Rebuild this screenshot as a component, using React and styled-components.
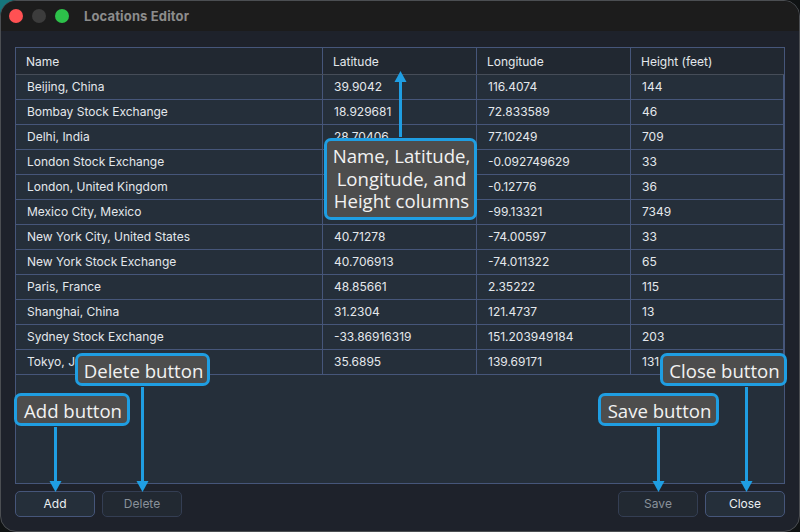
import React from "react";
import styled, { createGlobalStyle } from "styled-components";

const GlobalStyle = createGlobalStyle`
  body {
    margin: 0;
    background-color: #101314;
  }
`;

const Desktop = styled.div`
  position: relative;
  width: 800px;
  height: 532px;
  overflow: hidden;
  background: linear-gradient(135deg, #16767c 0, #16767c 8px, #101314 16px);
`;

const Window = styled.div`
  box-sizing: border-box;
  width: 800px;
  height: 532px;
  display: flex;
  flex-direction: column;
  border: 1px solid #4b4e52;
  border-radius: 16px;
  overflow: hidden;
  background-color: #1e222b;
  font-family: Inter, "Liberation Sans", sans-serif;
`;

const TitleBar = styled.div`
  height: 30px;
  flex: none;
  display: flex;
  align-items: center;
  gap: 9px;
  padding-left: 8px;
  background-color: #1c1c1c;
`;

const Light = styled.div`
  width: 14px;
  height: 14px;
  border-radius: 50%;
  background-color: ${(props) => props.$color};
`;

const Title = styled.div`
  margin-left: 6px;
  font-size: 13px;
  font-weight: 700;
  letter-spacing: 0.14px;
  color: #8c8c8c;
`;

const Table = styled.div`
  box-sizing: border-box;
  width: 770px;
  height: 437px;
  flex: none;
  margin: 16px 0 0 14px;
  border: 1px solid #46567a;
  background-color: #252f3a;
`;

const Row = styled.div`
  box-sizing: border-box;
  display: grid;
  grid-template-columns: 307px 154px 154px 1fr;
  height: 25px;
  border-bottom: 1px solid #46567a;
`;

const HeaderRow = styled(Row)`
  height: 27px;
  border-bottom-color: #464d58;
  background-color: #212831;
`;

const Cell = styled.div`
  display: flex;
  align-items: center;
  padding: 0 0 2px 11px;
  border-right: 1px solid #46567a;
  font-size: 12px;
  color: #e4e8ec;
  white-space: nowrap;
`;

const HeaderCell = styled(Cell)`
  padding: 0 0 0 10px;

  &:last-child {
    border-right: none;
  }
`;

const Footer = styled.div`
  display: flex;
  gap: 7px;
  padding: 7px 14px 0;
`;

const Spacer = styled.div`
  flex: 1;
`;

const Button = styled.button`
  box-sizing: border-box;
  width: 80px;
  height: 26px;
  padding: 0 0 1px;
  border: 1px solid #46567a;
  border-radius: 5px;
  background-color: #252f3a;
  font-family: inherit;
  font-size: 12px;
  color: #eceff2;

  &:disabled {
    border-color: #343e53;
    background-color: #222932;
    color: #89919a;
  }
`;

const Callout = styled.div`
  box-sizing: border-box;
  position: absolute;
  left: ${(props) => props.$x}px;
  top: ${(props) => props.$y}px;
  width: ${(props) => props.$width}px;
  height: ${(props) => props.$height}px;
  padding: 4px 0 0 2px;
  border: 3px solid #1f9ee2;
  border-radius: 7px;
  background-color: #4d4d4d;
  font-family: "Open Sans", "Noto Sans", sans-serif;
  font-size: 18.6px;
  line-height: 22.5px;
  text-align: center;
  white-space: nowrap;
  color: #f2f2f2;
`;

const ArrowSvg = styled.svg`
  position: absolute;
  left: ${(props) => props.$x}px;
  top: ${(props) => props.$y}px;
  fill: #1f9ee2;
`;

const columns = ["Name", "Latitude", "Longitude", "Height (feet)"];

const locations = [
  ["Beijing, China", "39.9042", "116.4074", "144"],
  ["Bombay Stock Exchange", "18.929681", "72.833589", "46"],
  ["Delhi, India", "28.70406", "77.10249", "709"],
  ["London Stock Exchange", "", "-0.092749629", "33"],
  ["London, United Kingdom", "", "-0.12776", "36"],
  ["Mexico City, Mexico", "", "-99.13321", "7349"],
  ["New York City, United States", "40.71278", "-74.00597", "33"],
  ["New York Stock Exchange", "40.706913", "-74.011322", "65"],
  ["Paris, France", "48.85661", "2.35222", "115"],
  ["Shanghai, China", "31.2304", "121.4737", "13"],
  ["Sydney Stock Exchange", "-33.86916319", "151.203949184", "203"],
  ["Tokyo, Japan", "35.6895", "139.69171", "131"],
];

function Arrow({ x, y, length, up }) {
  return (
    <ArrowSvg $x={x - 6.5} $y={y} width="13" height={length}>
      <g transform={up ? `rotate(180 6.5 ${length / 2})` : undefined}>
        <rect x="5" y="0" width="3" height={length - 8} />
        <polygon points={`0.5,${length - 11} 12.5,${length - 11} 6.5,${length}`} />
      </g>
    </ArrowSvg>
  );
}

function App() {
  return (
    <Desktop>
      <GlobalStyle />
      <Window>
        <TitleBar>
          <Light $color="#ff5153" />
          <Light $color="#3c3c3c" />
          <Light $color="#2dc14a" />
          <Title>Locations Editor</Title>
        </TitleBar>
        <Table>
          <HeaderRow>
            {columns.map((column) => (
              <HeaderCell key={column}>{column}</HeaderCell>
            ))}
          </HeaderRow>
          {locations.map((location) => (
            <Row key={location[0]}>
              {location.map((value, index) => (
                <Cell key={columns[index]}>{value}</Cell>
              ))}
            </Row>
          ))}
        </Table>
        <Footer>
          <Button>Add</Button>
          <Button disabled>Delete</Button>
          <Spacer />
          <Button disabled>Save</Button>
          <Button>Close</Button>
        </Footer>
      </Window>

      <Arrow x={400.5} y={71} length={66} up />
      <Arrow x={55.5} y={427} length={65} />
      <Arrow x={142.5} y={387} length={105} />
      <Arrow x={658.5} y={427} length={65} />
      <Arrow x={746.5} y={387} length={105} />

      <Callout $x={324} $y={138} $width={153} $height={82}>
        Name, Latitude,
        <br />
        Longitude, and
        <br />
        Height columns
      </Callout>
      <Callout $x={75} $y={353} $width={135} $height={33}>
        Delete button
      </Callout>
      <Callout $x={14} $y={393} $width={116} $height={33}>
        Add button
      </Callout>
      <Callout $x={598} $y={393} $width={121} $height={33}>
        Save button
      </Callout>
      <Callout $x={660} $y={353} $width={127} $height={33}>
        Close button
      </Callout>
    </Desktop>
  );
}

export default App;
